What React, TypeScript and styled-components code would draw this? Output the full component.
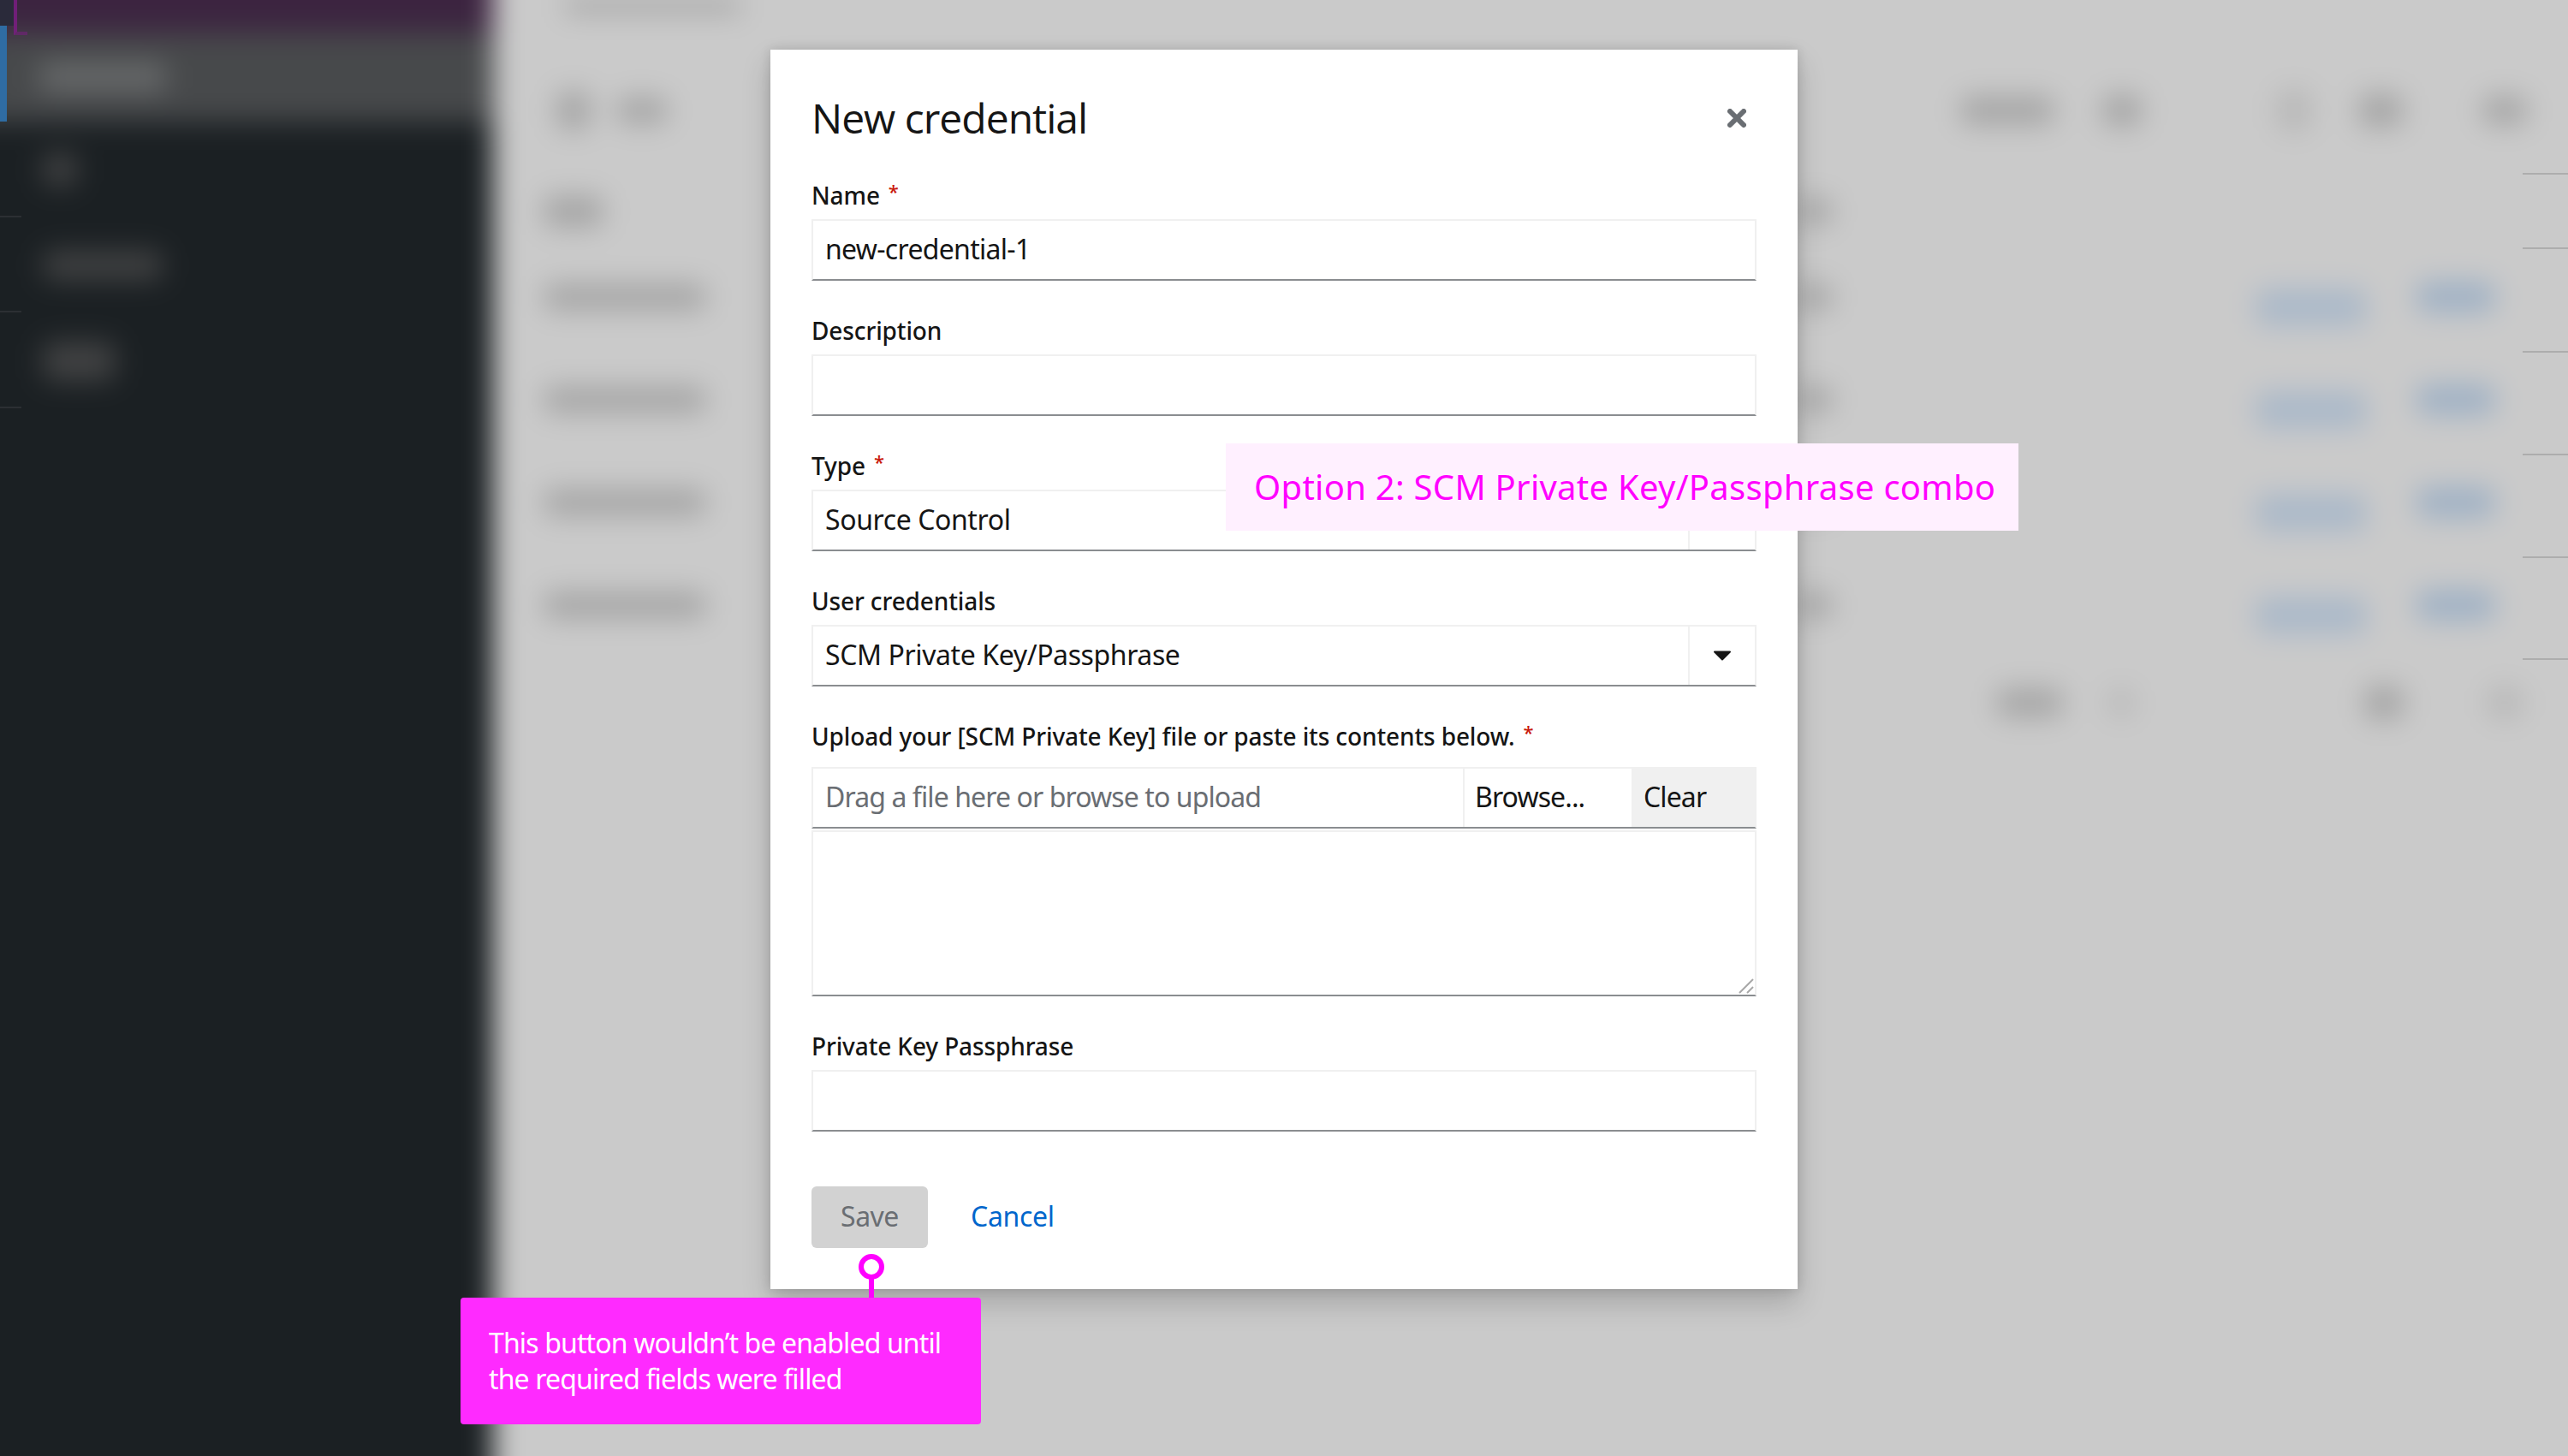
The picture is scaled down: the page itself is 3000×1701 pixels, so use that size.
import { ReactElement } from 'react';
import styled, { createGlobalStyle } from 'styled-components';

const GlobalStyle = createGlobalStyle`
  html, body {
    margin: 0;
    padding: 0;
    background: #cacaca;
  }
  * {
    box-sizing: border-box;
  }
`;

const FONT = `'Noto Sans', 'Open Sans', sans-serif`;

const Stage = styled.div`
  position: relative;
  width: 3000px;
  height: 1701px;
  overflow: hidden;
  background: #cacaca;
  font-family: ${FONT};
`;

/* page behind the modal, blurred out */
const BlurredPage = styled.div`
  display: grid;
  grid-template-columns: 616px 1fr;
  width: 3080px;
  height: 1781px;
  margin: -40px;
  filter: blur(16px);
`;

const Sidebar = styled.div`
  display: flex;
  flex-direction: column;
  padding-top: 78px;
  background: #1b2023;
  box-shadow: inset 0 78px 0 #3c2440;
`;

const ActiveNav = styled.div`
  display: flex;
  align-items: center;
  height: 104px;
  padding-left: 85px;
  background: #47494b;
`;

const NavRow = styled.div`
  display: flex;
  align-items: center;
  height: 112px;
  padding-left: 90px;
`;

const NavBlob = styled.div<{ $w: number; $h: number; $light?: boolean }>`
  width: ${(p) => p.$w}px;
  height: ${(p) => p.$h}px;
  border-radius: 10px;
  background: ${(p) => (p.$light ? '#666869' : '#414243')};
`;

const Main = styled.div`
  display: flex;
  flex-direction: column;
  padding-top: 40px;
  background: #cacaca;
`;

const Crumb = styled.div`
  width: 205px;
  height: 14px;
  margin-left: 84px;
  background: #9c9c9c;
`;

const Bar = styled.div<{ $top: number }>`
  display: flex;
  align-items: center;
  height: 46px;
  margin-top: ${(p) => p.$top}px;
`;

const Smudge = styled.div<{ $left: number; $w: number; $h?: number; $faint?: boolean }>`
  flex: none;
  width: ${(p) => p.$w}px;
  height: ${(p) => p.$h ?? 28}px;
  margin-left: ${(p) => p.$left}px;
  border-radius: 12px;
  background: ${(p) => (p.$faint ? '#b8b8b8' : '#a6a6a6')};
`;

const TableRow = styled.div`
  display: grid;
  grid-template-columns: 190px 1275px 40px 495px 130px 58px 92px;
  align-items: center;
  height: 120px;
  padding-left: 59px;
`;

const Cell = styled.div<{ $col: number; $tone?: 'gray' | 'blue' | 'link'; $drop?: number }>`
  grid-column: ${(p) => p.$col};
  grid-row: 1;
  height: ${(p) => (p.$tone === 'blue' ? 44 : p.$tone === 'link' ? 36 : 32)}px;
  margin-top: ${(p) => p.$drop ?? 0}px;
  border-radius: 12px;
  background: ${(p) =>
    p.$tone === 'blue' ? '#abb9c9' : p.$tone === 'link' ? '#9fb1c5' : '#a6a6a6'};
`;

const HeaderCell = styled(Cell)`
  width: 70px;
  height: 38px;
`;

const TableHead = styled(TableRow)`
  height: 46px;
  margin-top: 72px;
  margin-bottom: 17px;
`;

/* un-blurred slivers at the edges of the page */
const LeftRail = styled.div`
  position: absolute;
  top: 0;
  left: 0;
  display: flex;
  flex-direction: column;
  width: 25px;
`;

const RailTop = styled.div`
  position: relative;
  width: 16px;
  height: 30px;
  background: #2a2a3a;
`;

const CornerMark = styled.div`
  position: absolute;
  top: 0;
  left: 16px;
  width: 16px;
  height: 41px;
  border-left: 4px solid rgba(122, 30, 130, 0.85);
  border-bottom: 4px solid rgba(122, 30, 130, 0.55);
`;

const ActiveMark = styled.div`
  width: 8px;
  height: 112px;
  background: #2f6ca3;
`;

const RailRow = styled.div`
  height: 111.7px;
  border-bottom: 2px solid #2c2f33;
`;

const RightRail = styled.div`
  position: absolute;
  top: 0;
  right: 0;
  display: flex;
  flex-direction: column;
  width: 53px;
`;

const RightRailRow = styled.div<{ $h: number }>`
  height: ${(p) => p.$h}px;
  border-bottom: 2px solid #adadad;
`;

/* modal */
const Overlay = styled.div`
  position: absolute;
  inset: 0;
  display: flex;
  justify-content: center;
  align-items: flex-start;
  padding-top: 58px;
`;

const Modal = styled.div`
  width: 1200px;
  padding: 48px;
  background: #fff;
  box-shadow: 0 16px 32px rgba(3, 3, 3, 0.18), 0 0 12px rgba(3, 3, 3, 0.14);
`;

const ModalHeader = styled.div`
  display: flex;
  justify-content: space-between;
  align-items: center;
  height: 64px;
  margin-bottom: 38px;
  padding-right: 12px;
`;

const Title = styled.h1`
  margin: 0;
  font-family: 'Open Sans', sans-serif;
  font-size: 48px;
  font-weight: 400;
  line-height: 64px;
  letter-spacing: -1px;
  color: #151515;
`;

const Form = styled.div`
  display: flex;
  flex-direction: column;
  gap: 38px;
`;

const Field = styled.div`
  display: flex;
  flex-direction: column;
`;

const Label = styled.label<{ $gap?: number }>`
  height: 42px;
  margin-bottom: ${(p) => p.$gap ?? 6}px;
  font-size: 28px;
  font-weight: 500;
  line-height: 41px;
  letter-spacing: -0.12px;
  color: #151515;
`;

const Star = styled.span`
  margin-left: 10px;
  font-size: 22px;
  line-height: 0;
  color: #c9190b;
  vertical-align: 7px;
`;

const TextInput = styled.input`
  display: block;
  width: 100%;
  height: 72px;
  padding: 0 14px 3px;
  border: 2px solid #f0f0f0;
  border-bottom-color: #8a8d90;
  border-radius: 0;
  outline: none;
  font-family: ${FONT};
  font-size: 32px;
  letter-spacing: -0.7px;
  color: #151515;
  background: #fff;

  &::placeholder {
    color: #6a6e73;
    opacity: 1;
    letter-spacing: -0.9px;
  }
`;

const SelectBox = styled.div`
  display: flex;
  align-items: stretch;
  height: 72px;
  border: 2px solid #f0f0f0;
  border-bottom-color: #8a8d90;
`;

const SelectValue = styled.div`
  flex: 1;
  padding-left: 14px;
  font-size: 32px;
  line-height: 65px;
  letter-spacing: -0.4px;
  color: #151515;
`;

const Toggle = styled.div`
  display: flex;
  justify-content: center;
  align-items: center;
  width: 78px;
  border-left: 2px solid #f0f0f0;
`;

const FileInput = styled(TextInput)`
  flex: 1;
  height: 100%;
  border: none;
`;

const FileButton = styled.div<{ $clear?: boolean }>`
  width: ${(p) => (p.$clear ? 144 : 197)}px;
  padding-left: ${(p) => (p.$clear ? 14 : 12)}px;
  border-left: ${(p) => (p.$clear ? 'none' : '2px solid #f0f0f0')};
  font-size: 32px;
  line-height: 65px;
  letter-spacing: -0.9px;
  color: #151515;
  background: ${(p) => (p.$clear ? '#f0f0f0' : 'transparent')};
`;

const TextAreaWrap = styled.div`
  position: relative;
  margin-top: 2px;
`;

const TextArea = styled.textarea`
  display: block;
  width: 100%;
  height: 194px;
  border: 2px solid #f0f0f0;
  border-bottom-color: #8a8d90;
  outline: none;
  resize: none;
`;

const Grip = styled.svg`
  position: absolute;
  right: 3px;
  bottom: 3px;
`;

const Actions = styled.div`
  display: flex;
  align-items: center;
  margin-top: 64px;
`;

const SaveButton = styled.div`
  width: 136px;
  height: 72px;
  border-radius: 6px;
  font-size: 32px;
  line-height: 70px;
  letter-spacing: -0.5px;
  text-align: center;
  color: #6a6e73;
  background: #d2d2d2;
`;

const CancelLink = styled.a`
  margin-left: 50px;
  margin-bottom: 3px;
  font-size: 32px;
  letter-spacing: -0.3px;
  color: #06c;
`;

/* annotations */
const OptionNote = styled.div`
  position: absolute;
  top: 518px;
  left: 1432px;
  width: 926px;
  height: 102px;
  padding-left: 33px;
  font-size: 40px;
  line-height: 102px;
  white-space: nowrap;
  letter-spacing: 0.27px;
  color: #ff00ff;
  background: #fff0ff;
`;

const SaveNote = styled.div`
  position: absolute;
  top: 1516px;
  left: 538px;
  width: 608px;
  height: 148px;
  padding: 32px 0 0 33px;
  border-radius: 4px;
  font-size: 32px;
  line-height: 42px;
  letter-spacing: -0.86px;
  color: #fff;
  background: #ff2aff;
`;

const NotePin = styled.svg`
  position: absolute;
  top: 1464px;
  left: 1002px;
`;

const CloseIcon = (): ReactElement => (
  <svg width="22" height="22" viewBox="0 0 22 22">
    <path d="M3 3 L19 19 M19 3 L3 19" stroke="#6a6e73" strokeWidth="6" strokeLinecap="round" />
  </svg>
);

const CaretIcon = (): ReactElement => (
  <svg width="20" height="12" viewBox="0 0 20 12">
    <path d="M1 0.5 H19 a1 1 0 0 1 0.7 1.7 L10.7 11.2 a1 1 0 0 1 -1.4 0 L0.3 2.2 A1 1 0 0 1 1 0.5 Z" fill="#151515" />
  </svg>
);

const rows = [0, 1, 2, 3];
const rightRailHeights = [204, 87, 121, 120, 120, 119];

const App = (): ReactElement => {
  return (
    <Stage>
      <GlobalStyle />
      <BlurredPage>
        <Sidebar>
          <ActiveNav>
            <NavBlob $w={150} $h={36} $light />
          </ActiveNav>
          <NavRow>
            <NavBlob $w={40} $h={38} />
          </NavRow>
          <NavRow>
            <NavBlob $w={140} $h={34} />
          </NavRow>
          <NavRow>
            <NavBlob $w={85} $h={46} />
          </NavRow>
        </Sidebar>
        <Main>
          <Crumb />
          <Bar $top={92}>
            <Smudge $left={74} $w={40} $h={46} />
            <Smudge $left={30} $w={60} $h={32} />
            <Smudge $left={1510} $w={110} $h={34} />
            <Smudge $left={56} $w={46} $h={38} />
            <Smudge $left={158} $w={40} $h={50} $faint />
            <Smudge $left={55} $w={52} $h={40} />
            <Smudge $left={93} $w={52} $h={34} />
          </Bar>
          <TableHead>
            <HeaderCell $col={1} />
            <Cell $col={3} />
          </TableHead>
          {rows.map((row) => (
            <TableRow key={row}>
              <Cell $col={1} />
              <Cell $col={3} />
              <Cell $col={5} $tone="blue" $drop={24} />
              <Cell $col={7} $tone="link" />
            </TableRow>
          ))}
          <Bar $top={31}>
            <Smudge $left={1756} $w={78} $h={34} />
            <Smudge $left={54} $w={28} $h={34} $faint />
            <Smudge $left={270} $w={46} $h={40} />
            <Smudge $left={98} $w={40} $h={38} $faint />
          </Bar>
        </Main>
      </BlurredPage>

      <LeftRail>
        <RailTop>
          <CornerMark />
        </RailTop>
        <ActiveMark />
        <RailRow />
        <RailRow />
        <RailRow />
      </LeftRail>
      <RightRail>
        {rightRailHeights.map((h, i) => (
          <RightRailRow key={i} $h={h} />
        ))}
      </RightRail>

      <Overlay>
        <Modal>
          <ModalHeader>
            <Title>New credential</Title>
            <CloseIcon />
          </ModalHeader>
          <Form>
            <Field>
              <Label>
                Name<Star>*</Star>
              </Label>
              <TextInput readOnly value="new-credential-1" />
            </Field>
            <Field>
              <Label>Description</Label>
              <TextInput readOnly />
            </Field>
            <Field>
              <Label>
                Type<Star>*</Star>
              </Label>
              <SelectBox>
                <SelectValue>Source Control</SelectValue>
                <Toggle>
                  <CaretIcon />
                </Toggle>
              </SelectBox>
            </Field>
            <Field>
              <Label>User credentials</Label>
              <SelectBox>
                <SelectValue>SCM Private Key/Passphrase</SelectValue>
                <Toggle>
                  <CaretIcon />
                </Toggle>
              </SelectBox>
            </Field>
            <Field>
              <Label $gap={14}>
                Upload your [SCM Private Key] file or paste its contents below.<Star>*</Star>
              </Label>
              <SelectBox>
                <FileInput readOnly placeholder="Drag a file here or browse to upload" />
                <FileButton>Browse...</FileButton>
                <FileButton $clear>Clear</FileButton>
              </SelectBox>
              <TextAreaWrap>
                <TextArea readOnly />
                <Grip width="18" height="18" viewBox="0 0 18 18">
                  <path d="M1 17 L17 1 M10 17 L17 10" stroke="#a8a8a8" strokeWidth="2" />
                </Grip>
              </TextAreaWrap>
            </Field>
            <Field>
              <Label>Private Key Passphrase</Label>
              <TextInput readOnly />
            </Field>
          </Form>
          <Actions>
            <SaveButton>Save</SaveButton>
            <CancelLink>Cancel</CancelLink>
          </Actions>
        </Modal>
      </Overlay>

      <OptionNote>Option 2: SCM Private Key/Passphrase combo</OptionNote>
      <NotePin width="32" height="52" viewBox="0 0 32 52">
        <ellipse cx="16" cy="16" rx="12" ry="12" fill="#fff" stroke="#ff00ff" strokeWidth="6" />
        <path d="M16 28 V52" stroke="#ff00ff" strokeWidth="6" />
      </NotePin>
      <SaveNote>
        This button wouldn’t be enabled until
        <br />
        the required fields were filled
      </SaveNote>
    </Stage>
  );
};

export default App;
